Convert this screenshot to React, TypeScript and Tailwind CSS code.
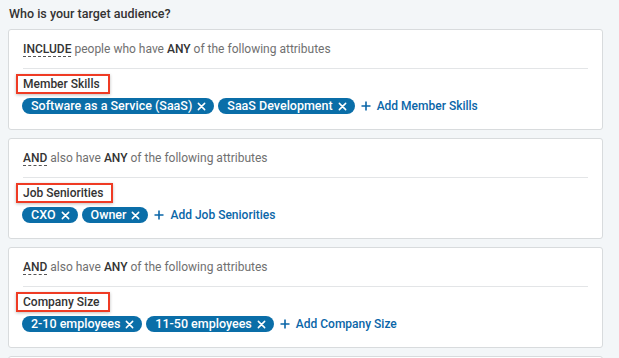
import React from 'react';

interface Section {
  lead: string;
  rest: string;
  label: string;
  chips: string[];
  addLabel: string;
}

const sections: Section[] = [
  {
    lead: 'INCLUDE',
    rest: 'people who have',
    label: 'Member Skills',
    chips: ['Software as a Service (SaaS)', 'SaaS Development'],
    addLabel: 'Add Member Skills',
  },
  {
    lead: 'AND',
    rest: 'also have',
    label: 'Job Seniorities',
    chips: ['CXO', 'Owner'],
    addLabel: 'Add Job Seniorities',
  },
  {
    lead: 'AND',
    rest: 'also have',
    label: 'Company Size',
    chips: ['2-10 employees', '11-50 employees'],
    addLabel: 'Add Company Size',
  },
];

function XIcon() {
  return (
    <svg width="9" height="9" viewBox="0 0 10 10" className="ml-[5px]">
      <path d="M1.5 1.5 L8.5 8.5 M8.5 1.5 L1.5 8.5" stroke="white" strokeWidth="1.7" strokeLinecap="round" />
    </svg>
  );
}

function PlusIcon() {
  return (
    <svg width="10" height="10" viewBox="0 0 10 10" className="mr-[6px]">
      <path d="M5 0.5 V9.5 M0.5 5 H9.5" stroke="#0a66a8" strokeWidth="1.6" />
    </svg>
  );
}

function AttributeCard({ section }: { section: Section }) {
  return (
    <div className="bg-white border border-[#d8dbdd] rounded-[3px] px-[14px] pb-[15px]">
      {/* Header */}
      <div className="pt-[11px] pb-[11px] border-b border-[#e3e5e7] text-[12px] leading-[16px] text-[#707070]">
        <span className="font-medium text-[#333333] border-b border-dashed border-[#555555]">{section.lead}</span>{' '}
        {section.rest} <span className="font-medium text-[#333333]">ANY</span> of the following attributes
      </div>

      {/* Label */}
      <div className="pt-[5px] flex">
        <span className="block -ml-[7px] pl-[5px] pr-[8px] py-0 border-2 border-[#ef3b24] shadow-[0_1px_3px_rgba(0,0,0,0.25)] text-[12px] leading-[16px] font-medium text-[#333333]">
          {section.label}
        </span>
      </div>

      {/* Chips */}
      <div className="mt-[4px] flex items-center gap-[4px] -ml-[1px]">
        {section.chips.map((chip) => (
          <span
            key={chip}
            className="inline-flex items-center h-[16px] pl-[9px] pr-[8px] rounded-full bg-[#0a6ea8] text-white text-[12.5px] leading-[16px] font-medium"
          >
            {chip}
            <XIcon />
          </span>
        ))}
        <span className="ml-[2px] inline-flex items-center text-[12px] leading-[16px] font-medium text-[#0a66a8]">
          <PlusIcon />
          {section.addLabel}
        </span>
      </div>
    </div>
  );
}

export default function App() {
  return (
    <div
      className="w-[619px] h-[358px] overflow-hidden bg-[#f3f6f8] pl-[8px] pr-[16px]"
      style={{ fontFamily: 'Roboto, "Liberation Sans", sans-serif' }}
    >
      <h2 className="pt-[6px] pb-[7px] pl-[1px] text-[12.5px] leading-[16px] font-medium text-[#333333]">
        Who is your target audience?
      </h2>
      <div className="flex flex-col gap-[8px]">
        {sections.map((s, i) => (
          <AttributeCard key={i} section={s} />
        ))}
        <div className="bg-white border border-[#d8dbdd] rounded-[3px] h-[60px]" />
      </div>
    </div>
  );
}
